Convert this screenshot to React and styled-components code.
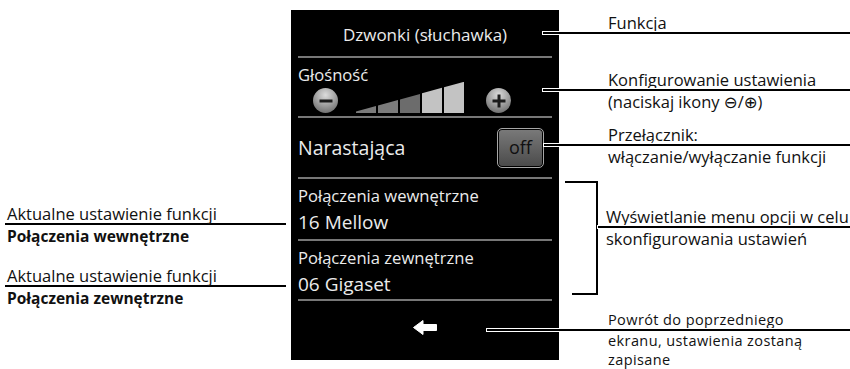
import React from "react";
import styled, { createGlobalStyle } from "styled-components";

const GlobalStyle = createGlobalStyle`
  body {
    margin: 0;
    background: #fff;
    font-family: "Open Sans", "DejaVu Sans", sans-serif;
  }
`;

const Page = styled.div`
  display: flex;
  width: 850px;
  height: 369px;
  overflow: hidden;
  color: #111;
`;

/* left notes */
const LeftCol = styled.div`
  flex: none;
  width: 291px;
  padding-top: 205px;
  box-sizing: border-box;
  font-size: 16.5px;
  line-height: 18px;
`;

const LeftNote = styled.div`
  margin-top: ${({ $top }) => $top || 0}px;
`;

const NoteText = styled.div`
  padding-left: ${({ $indent }) => $indent || 0}px;
  font-weight: ${({ $bold }) => ($bold ? 700 : 400)};
  font-size: ${({ $bold }) => ($bold ? 15.5 : 16.5)}px;
  margin-top: ${({ $top }) => $top || 0}px;
  white-space: nowrap;
`;

const Rule = styled.div`
  height: 2px;
  background: #000;
  margin: 0 5px;
`;

/* phone screen */
const Phone = styled.div`
  flex: none;
  width: 268px;
  height: 350px;
  margin-top: 10px;
  padding: 0 7px;
  box-sizing: border-box;
  background: #000;
  color: #ebebeb;
  display: flex;
  flex-direction: column;
`;

const Section = styled.div`
  flex: none;
  height: ${({ $h }) => $h}px;
  box-sizing: border-box;
`;

const Header = styled(Section)`
  display: flex;
  align-items: center;
  justify-content: center;
  font-size: 17px;
  padding-top: 2px;
`;

const Sep = styled.div`
  flex: none;
  height: 2px;
  background: #777;
`;

const Label = styled.div`
  font-size: 16.6px;
  line-height: 20px;
  white-space: nowrap;
`;

const Value = styled.div`
  font-size: 19px;
  line-height: 24px;
  margin-top: 4px;
  white-space: nowrap;
`;

const VolumeSection = styled(Section)`
  padding-top: 7px;
`;

const VolumeRow = styled.div`
  display: flex;
  align-items: flex-end;
  margin-top: -3px;
`;

const RoundKey = styled.div`
  position: relative;
  flex: none;
  width: 25px;
  height: 25px;
  border-radius: 50%;
  margin-left: ${({ $left }) => $left || 0}px;
  background: radial-gradient(circle at 50% 28%, #dcdcdc 0%, #a2a2a2 45%, #5a5a5a 100%);

  &::before,
  &::after {
    content: "";
    position: absolute;
    left: 50%;
    top: 50%;
    background: #1c1c1c;
    transform: translate(-50%, -50%);
  }
  &::before {
    width: 13px;
    height: 3px;
  }
  &::after {
    width: 3px;
    height: 13px;
    display: ${({ $plus }) => ($plus ? "block" : "none")};
  }
`;

const Bars = styled.svg`
  flex: none;
  margin-left: 18px;
  display: block;
`;

const ToggleSection = styled(Section)`
  display: flex;
  align-items: center;
  justify-content: space-between;
  padding-right: 8px;
`;

const BigLabel = styled.div`
  font-size: 19.5px;
`;

const OffButton = styled.div`
  width: 47px;
  height: 40px;
  box-sizing: border-box;
  border: 1px solid #a6a6a6;
  border-radius: 5px;
  box-shadow: inset 0 0 0 1px #000;
  background: linear-gradient(#7a7a7a, #4a4a4a);
  color: #101010;
  font-size: 18px;
  display: flex;
  align-items: center;
  justify-content: center;
  padding-bottom: 2px;
`;

const OptionSection = styled(Section)`
  padding-top: 7px;
`;

const BackSection = styled(Section)`
  display: flex;
  align-items: center;
  justify-content: center;
  padding-bottom: 6px;
`;

/* right notes */
const RightCol = styled.div`
  flex: 1;
  padding-top: 14px;
  font-size: 16.5px;
  line-height: 18px;
  display: flex;
  flex-direction: column;
`;

const RightNote = styled.div`
  margin-top: ${({ $top }) => $top || 0}px;
  padding-left: ${({ $indent }) => $indent ?? 49}px;
  font-size: ${({ $size }) => ($size ? `${$size}px` : "inherit")};
  letter-spacing: ${({ $track }) => $track || 0}px;
`;

const Leader = styled.div`
  position: relative;
  z-index: 1;
  height: 2px;
  background: #000;
  margin-left: -${({ $reach }) => $reach}px;
  box-shadow: 0 0 0 1px #fff;
`;

const BracketNote = styled.div`
  display: flex;
  margin-top: ${({ $top }) => $top}px;
`;

const Bracket = styled.div`
  position: relative;
  flex: none;
  width: 33px;
  height: 114px;
  margin-left: 6px;
  border-top: 2px solid #000;
  border-right: 2px solid #000;
  box-sizing: border-box;

  &::after {
    content: "";
    position: absolute;
    left: 7px;
    right: 0;
    bottom: 0;
    height: 2px;
    background: #000;
  }
`;

const BracketBody = styled.div`
  flex: 1;
  padding-top: 27px;
`;

const Line = styled.div`
  white-space: nowrap;
  line-height: ${({ $lh }) => $lh || 18}px;
  margin-top: ${({ $top }) => $top || 0}px;
`;

const barColors = ["#7b7b7b", "#7b7b7b", "#6c6c6c", "#c3c3c3", "#c3c3c3"];

const VolumeBars = () => {
  const h = (x) => 1.5 + x * 0.275;
  return (
    <Bars width="108" height="31" viewBox="0 0 108 31">
      {barColors.map((c, i) => {
        const x0 = i * 22;
        const x1 = x0 + 20;
        return (
          <polygon
            key={i}
            fill={c}
            points={`${x0},31 ${x0},${31 - h(x0)} ${x1},${31 - h(x1)} ${x1},31`}
          />
        );
      })}
    </Bars>
  );
};

const BackArrow = () => (
  <svg width="24" height="15" viewBox="0 0 24 15">
    <path
      d="M0.5 7.5 L10 0.5 L10 4.5 L23.5 4.5 L23.5 10.5 L10 10.5 L10 14.5 Z"
      fill="#fff"
      stroke="#fff"
      strokeLinejoin="round"
    />
  </svg>
);

export default function App() {
  return (
    <>
      <GlobalStyle />
      <Page>
        <LeftCol>
          <LeftNote>
            <NoteText $indent={7}>Aktualne ustawienie funkcji</NoteText>
            <Rule />
            <NoteText $indent={7} $bold $top={2}>
              Połączenia wewnętrzne
            </NoteText>
          </LeftNote>
          <LeftNote $top={22}>
            <NoteText $indent={7}>Aktualne ustawienie funkcji</NoteText>
            <Rule />
            <NoteText $indent={7} $bold $top={2}>
              Połączenia zewnętrzne
            </NoteText>
          </LeftNote>
        </LeftCol>

        <Phone>
          <Header $h={46}>Dzwonki (słuchawka)</Header>
          <Sep />
          <VolumeSection $h={58}>
            <Label>Głośność</Label>
            <VolumeRow>
              <RoundKey $left={15} />
              <VolumeBars />
              <RoundKey $left={22} $plus />
            </VolumeRow>
          </VolumeSection>
          <Sep />
          <ToggleSection $h={59}>
            <BigLabel>Narastająca</BigLabel>
            <OffButton>off</OffButton>
          </ToggleSection>
          <Sep />
          <OptionSection $h={60}>
            <Label>Połączenia wewnętrzne</Label>
            <Value>16 Mellow</Value>
          </OptionSection>
          <Sep />
          <OptionSection $h={58}>
            <Label>Połączenia zewnętrzne</Label>
            <Value>06 Gigaset</Value>
          </OptionSection>
          <Sep />
          <BackSection $h={59}>
            <BackArrow />
          </BackSection>
        </Phone>

        <RightCol>
          <RightNote>
            <Line>Funkcja</Line>
            <Leader $reach={65} />
          </RightNote>
          <RightNote $top={37}>
            <Line>Konfigurowanie ustawienia</Line>
            <Leader $reach={65} />
            <Line $top={2}>(naciskaj ikony ⊖/⊕)</Line>
          </RightNote>
          <RightNote $top={15}>
            <Line>Przełącznik:</Line>
            <Leader $reach={64} />
            <Line $top={2}>włączanie/wyłączanie funkcji</Line>
          </RightNote>
          <BracketNote $top={15}>
            <Bracket />
            <BracketBody>
              <RightNote $indent={8}>
                <Line>Wyświetlanie menu opcji w celu</Line>
                <Leader $reach={8} />
                <Line $top={2}>skonfigurowania ustawień</Line>
              </RightNote>
            </BracketBody>
          </BracketNote>
          <RightNote $top={15} $size={14.5} $track={0.4}>
            <Line $lh={19}>Powrót do poprzedniego</Line>
            <Leader $reach={121} />
            <Line $lh={19}>ekranu, ustawienia zostaną</Line>
            <Line $lh={19}>zapisane</Line>
          </RightNote>
        </RightCol>
      </Page>
    </>
  );
}
